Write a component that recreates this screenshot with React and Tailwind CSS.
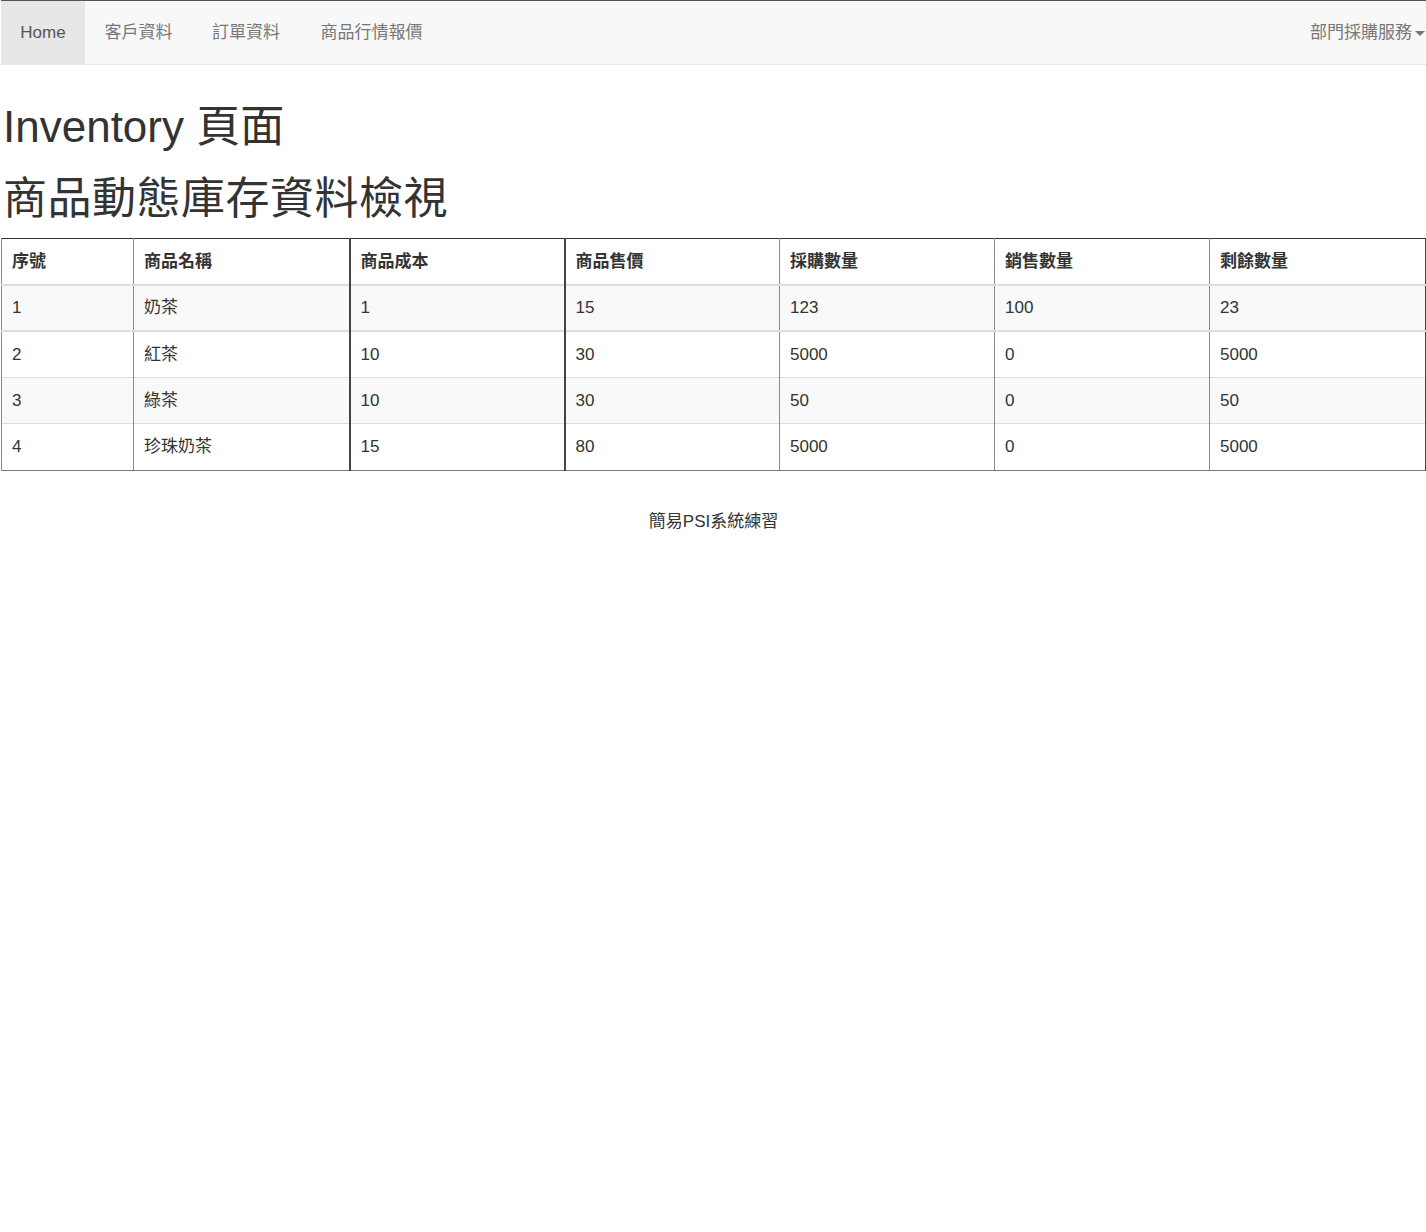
import React from "react";

const rows = [
  ["1", "奶茶", "1", "15", "123", "100", "23"],
  ["2", "紅茶", "10", "30", "5000", "0", "5000"],
  ["3", "綠茶", "10", "30", "50", "0", "50"],
  ["4", "珍珠奶茶", "15", "80", "5000", "0", "5000"],
];
const heads = ["序號", "商品名稱", "商品成本", "商品售價", "採購數量", "銷售數量", "剩餘數量"];
const widths = ["w-[132px]", "w-[216px]", "w-[215px]", "w-[215px]", "w-[215px]", "w-[215px]", "w-[216px]"];
const leftBorders = [
  "border-l border-l-[#8a8a8a]",
  "border-l border-l-[#8a8a8a]",
  "border-l-2 border-l-[#444]",
  "border-l-2 border-l-[#444]",
  "border-l border-l-[#8a8a8a]",
  "border-l border-l-[#8a8a8a]",
  "border-l border-l-[#8a8a8a]",
];

export default function App() {
  return (
    <div className="min-h-[1232px] bg-white pl-px text-[#333] font-['Liberation_Sans','Noto_Sans_CJK_TC',sans-serif]">
      <nav className="flex h-[65px] border-t border-b border-t-[#555] border-b-[#e7e7e7] bg-[#f8f8f8] text-[17px]">
        <a className="flex w-[84px] items-center justify-center bg-[#e7e7e7] text-[#555]">Home</a>
        <a className="flex w-[107px] items-center justify-center text-[#777]">客戶資料</a>
        <a className="flex w-[108px] items-center justify-center text-[#777]">訂單資料</a>
        <a className="flex w-[143px] items-center justify-center text-[#777]">商品行情報價</a>
        <div className="flex-1" />
        <a className="flex items-center pr-px text-[#777]">
          部門採購服務
          <span className="ml-[3px] mt-[2px] inline-block h-0 w-0 border-x-[5px] border-t-[5px] border-x-transparent border-t-[#777]" />
        </a>
      </nav>

      <h1 className="mt-[38px] pl-[2px] text-[44px] leading-[48px] font-normal">Inventory 頁面</h1>
      <h2 className="mt-[24px] pl-[2px] text-[44px] leading-[48px] tracking-[0.5px] font-normal">商品動態庫存資料檢視</h2>

      <table className="mt-[15px] w-[1425px] border-collapse table-fixed border-t border-t-[#333] border-b border-b-[#777] border-r-2 border-r-[#444] text-[17px]">
        <colgroup>
          {widths.map((w, i) => (
            <col key={i} className={w} />
          ))}
        </colgroup>
        <thead>
          <tr className="h-[46px] border-b-2 border-b-[#ddd]">
            {heads.map((h, i) => (
              <th key={i} className={`px-[10px] text-left align-middle font-bold ${leftBorders[i]}`}>{h}</th>
            ))}
          </tr>
        </thead>
        <tbody>
          {rows.map((r, ri) => (
            <tr
              key={ri}
              className={`${ri % 2 === 1 ? "h-[47px]" : "h-[46px]"} ${ri % 2 === 0 ? "bg-[#f9f9f9]" : "bg-white"} ${ri === 0 ? "border-b-2 border-b-[#ddd]" : ri < 3 ? "border-b border-b-[#ddd]" : ""}`}
            >
              {r.map((c, ci) => (
                <td key={ci} className={`px-[10px] align-middle ${leftBorders[ci]}`}>{c}</td>
              ))}
            </tr>
          ))}
        </tbody>
      </table>

      <footer className="mt-[38px] text-center text-[17px]">簡易PSI系統練習</footer>
    </div>
  );
}
